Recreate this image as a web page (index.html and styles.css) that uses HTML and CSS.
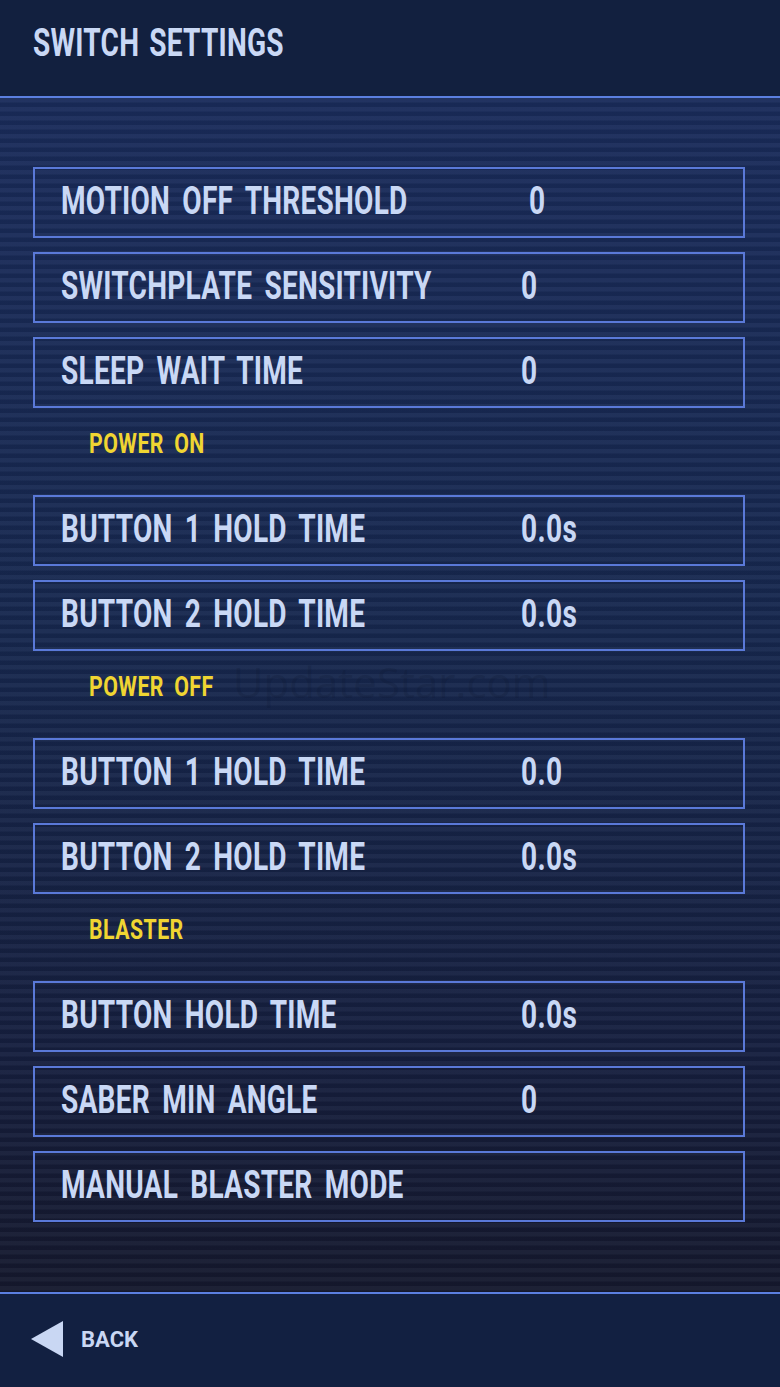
FILE: index.html
```html
<!DOCTYPE html>
<html lang="en">
<head>
<meta charset="utf-8">
<title>Switch Settings</title>
<link rel="stylesheet" href="styles.css">
</head>
<body>
<div class="screen">
  <header class="topbar">
    <h1 class="title"><span class="cond">SWITCH SETTINGS</span></h1>
  </header>
  <main class="content">
    <div class="row"><span class="label"><span class="cond">MOTION OFF THRESHOLD</span></span><span class="value value-indent"><span class="cond">0</span></span></div>
    <div class="row"><span class="label"><span class="cond">SWITCHPLATE SENSITIVITY</span></span><span class="value"><span class="cond">0</span></span></div>
    <div class="row"><span class="label"><span class="cond">SLEEP WAIT TIME</span></span><span class="value"><span class="cond">0</span></span></div>
    <div class="section"><span class="cond sec">POWER ON</span></div>
    <div class="row"><span class="label"><span class="cond">BUTTON 1 HOLD TIME</span></span><span class="value"><span class="cond">0.0s</span></span></div>
    <div class="row"><span class="label"><span class="cond">BUTTON 2 HOLD TIME</span></span><span class="value"><span class="cond">0.0s</span></span></div>
    <div class="section"><span class="cond sec">POWER OFF</span><span class="watermark">UpdateStar.com</span></div>
    <div class="row"><span class="label"><span class="cond">BUTTON 1 HOLD TIME</span></span><span class="value"><span class="cond">0.0</span></span></div>
    <div class="row"><span class="label"><span class="cond">BUTTON 2 HOLD TIME</span></span><span class="value"><span class="cond">0.0s</span></span></div>
    <div class="section"><span class="cond sec">BLASTER</span></div>
    <div class="row"><span class="label"><span class="cond">BUTTON HOLD TIME</span></span><span class="value"><span class="cond">0.0s</span></span></div>
    <div class="row"><span class="label"><span class="cond">SABER MIN ANGLE</span></span><span class="value"><span class="cond">0</span></span></div>
    <div class="row"><span class="label"><span class="cond">MANUAL BLASTER MODE</span></span><span class="value"></span></div>
  </main>
  <footer class="bottombar">
    <div class="back">
      <svg class="back-arrow" width="32" height="36" viewBox="0 0 32 36"><polygon points="0,18 32,0 32,36" fill="#c9d7f3"/></svg>
      <span class="back-text">BACK</span>
    </div>
  </footer>
</div>
</body>
</html>
```
FILE: styles.css
```css
* { box-sizing: border-box; }
html, body { margin: 0; padding: 0; }
body {
  width: 780px;
  height: 1387px;
  background: #122041;
  font-family: Roboto, "Liberation Sans", sans-serif;
  overflow: hidden;
}
.screen {
  display: flex;
  flex-direction: column;
  height: 1387px;
}
.cond {
  display: inline-block;
  transform: scaleX(0.72);
  transform-origin: left center;
  white-space: nowrap;
}
.cond.sec { transform: scaleX(0.76); }
.topbar {
  height: 98px;
  background: #12203f;
  border-bottom: 2px solid #5b7fe0;
  padding: 21px 0 0 33px;
}
.title {
  margin: 0;
  font-size: 39px;
  line-height: 44px;
  font-weight: 700;
  letter-spacing: 0.3px;
  word-spacing: 4px;
  color: #c9d8f5;
}
.content {
  position: relative;
  flex: 1;
  padding: 69px 35px 0 33px;
  display: flex;
  flex-direction: column;
  gap: 14px;
  background:
    repeating-linear-gradient(to bottom, rgba(255,255,255,0.035) 0px, rgba(255,255,255,0.035) 4px, rgba(0,0,0,0.07) 5px, rgba(0,0,0,0.07) 9px),
    linear-gradient(to bottom, #1a2c5b 0%, #17284f 45%, #161f3f 80%, #15192e 100%);
}
.row {
  height: 71px;
  border: 2px solid #5a79d8;
  padding: 0 0 4px 26px;
  display: grid;
  grid-template-columns: 460px 1fr;
  align-items: center;
  color: #c9d8f5;
  font-size: 39px;
  font-weight: 700;
  line-height: 44px;
}
.label {
  display: block;
  letter-spacing: 0.3px;
  word-spacing: 7px;
}
.value { display: block; letter-spacing: 0.5px; }
.value-indent { padding-left: 8px; }
.section {
  position: relative;
  height: 59px;
  padding: 5px 0 0 56px;
  color: #f0d532;
  font-size: 28px;
  font-weight: 700;
  line-height: 34px;
  word-spacing: 6px;
  letter-spacing: 0.6px;
}
.watermark {
  position: absolute;
  left: 200px;
  top: 0px;
  font-family: "Open Sans", sans-serif;
  font-size: 42px;
  font-weight: 400;
  letter-spacing: 0;
  word-spacing: 0;
  color: rgba(10, 18, 40, 0.18);
}
.bottombar {
  height: 95px;
  background: #122041;
  border-top: 2px solid #5b7fe0;
  padding: 27px 0 0 31px;
}
.back {
  display: flex;
  align-items: center;
  gap: 18px;
}
.back-arrow { display: block; }
.back-text {
  color: #c9d7f3;
  font-size: 22px;
  font-weight: 700;
  letter-spacing: 0;
}
```
